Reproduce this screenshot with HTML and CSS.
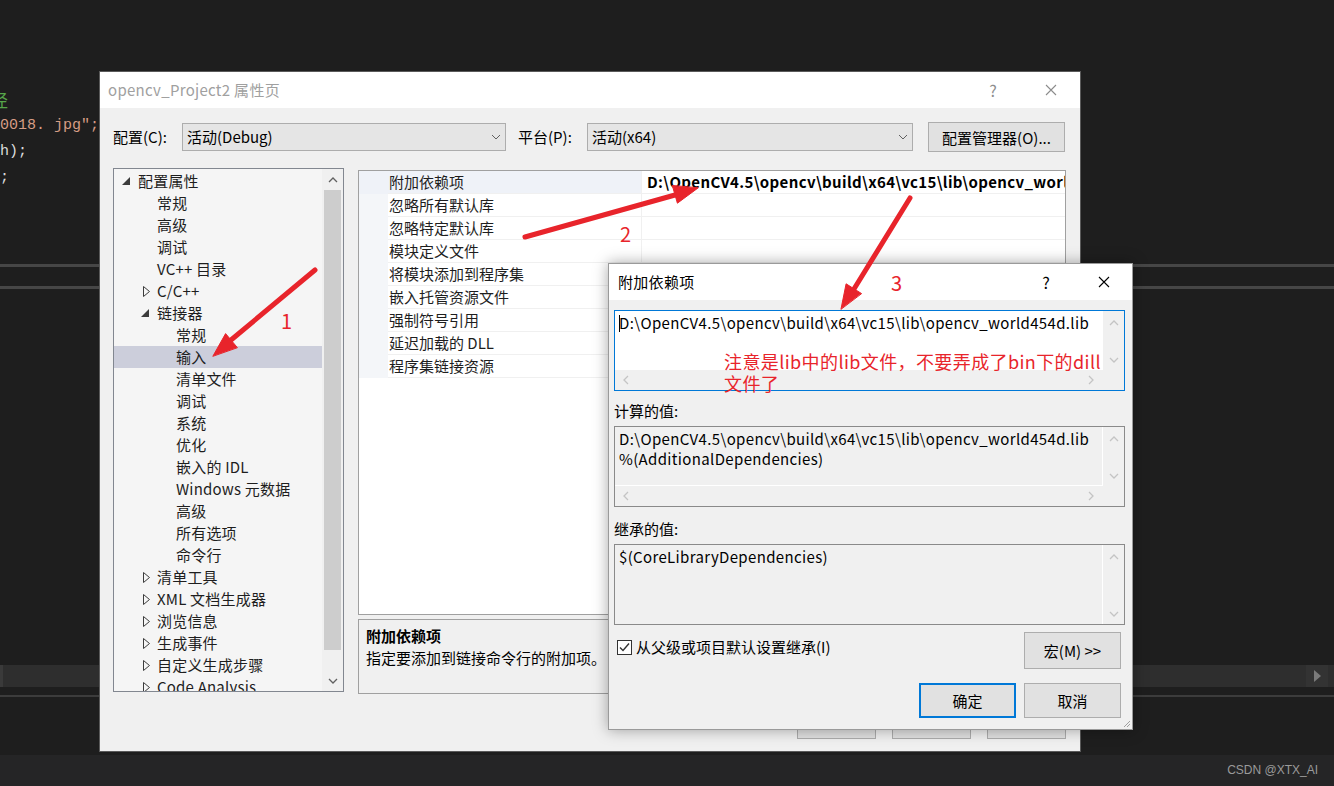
FILE: index.html
```html
<!DOCTYPE html>
<html lang="zh-CN">
<head>
    <meta charset="UTF-8">
    <title>opencv_Project2 属性页</title>
    <link rel="stylesheet" href="styles.css">
</head>
<body>

<div class="desktop">
    <!-- editor behind the dialogs -->
    <div class="editor">
        <div class="code">
            <div class="ln cmt"><span class="cut-a">径</span></div>
            <div class="ln str">0018. jpg″;</div>
            <div class="ln">h);</div>
            <div class="ln">;</div>
        </div>
        <div class="rule rule-top"></div>
        <div class="rule rule-mid"></div>
        <div class="hscroll">
            <span class="hs-start"></span>
            <span class="hs-arrow"><svg width="7" height="12" viewBox="0 0 7 12"><path d="M0 0L7 6L0 12Z" fill="#7a7a7a"/></svg></span>
        </div>
        <div class="rule rule-low"></div>
    </div>
    <div class="status">CSDN @XTX_AI</div>

    <!-- property pages dialog -->
    <section class="dlg dlg-main">
        <header class="titlebar">
            <span class="title">opencv_Project2 属性页</span>
            <span class="tb-btn tb-help">?</span>
            <span class="tb-btn tb-close"><svg width="12" height="12" viewBox="0 0 12 12"><path d="M1 1L11 11M11 1L1 11" stroke="currentColor" stroke-width="1.1"/></svg></span>
        </header>
        <div class="dlg-body">
            <div class="cfg-row">
                <span class="cfg-label">配置(C):</span>
                <div class="select sel-cfg">
                    <span>活动(Debug)</span>
                    <svg width="10" height="6" viewBox="0 0 10 6"><path d="M1 1L5 5L9 1" fill="none" stroke="#606060"/></svg>
                </div>
                <span class="cfg-label plat">平台(P):</span>
                <div class="select sel-plat">
                    <span>活动(x64)</span>
                    <svg width="10" height="6" viewBox="0 0 10 6"><path d="M1 1L5 5L9 1" fill="none" stroke="#606060"/></svg>
                </div>
                <button class="btn btn-mgr">配置管理器(O)...</button>
            </div>

            <div class="main-area">
                <div class="tree">
                    <div class="tree-list">
                        <div class="node l0"><span class="tw"><svg class="t-open" width="8" height="8" viewBox="0 0 8 8"><path d="M8 0V8H0Z"/></svg></span>配置属性</div>
                        <div class="node l1"><span class="tw"></span>常规</div>
                        <div class="node l1"><span class="tw"></span>高级</div>
                        <div class="node l1"><span class="tw"></span>调试</div>
                        <div class="node l1"><span class="tw"></span>VC++ 目录</div>
                        <div class="node l1"><span class="tw"><svg class="t-closed" width="7" height="11" viewBox="0 0 7 11"><path d="M.5 .5L6.5 5.5L.5 10.5Z"/></svg></span>C/C++</div>
                        <div class="node l1"><span class="tw"><svg class="t-open" width="8" height="8" viewBox="0 0 8 8"><path d="M8 0V8H0Z"/></svg></span>链接器</div>
                        <div class="node l2"><span class="tw"></span>常规</div>
                        <div class="node l2 selected"><span class="tw"></span>输入</div>
                        <div class="node l2"><span class="tw"></span>清单文件</div>
                        <div class="node l2"><span class="tw"></span>调试</div>
                        <div class="node l2"><span class="tw"></span>系统</div>
                        <div class="node l2"><span class="tw"></span>优化</div>
                        <div class="node l2"><span class="tw"></span>嵌入的 IDL</div>
                        <div class="node l2"><span class="tw"></span>Windows 元数据</div>
                        <div class="node l2"><span class="tw"></span>高级</div>
                        <div class="node l2"><span class="tw"></span>所有选项</div>
                        <div class="node l2"><span class="tw"></span>命令行</div>
                        <div class="node l1"><span class="tw"><svg class="t-closed" width="7" height="11" viewBox="0 0 7 11"><path d="M.5 .5L6.5 5.5L.5 10.5Z"/></svg></span>清单工具</div>
                        <div class="node l1"><span class="tw"><svg class="t-closed" width="7" height="11" viewBox="0 0 7 11"><path d="M.5 .5L6.5 5.5L.5 10.5Z"/></svg></span>XML 文档生成器</div>
                        <div class="node l1"><span class="tw"><svg class="t-closed" width="7" height="11" viewBox="0 0 7 11"><path d="M.5 .5L6.5 5.5L.5 10.5Z"/></svg></span>浏览信息</div>
                        <div class="node l1"><span class="tw"><svg class="t-closed" width="7" height="11" viewBox="0 0 7 11"><path d="M.5 .5L6.5 5.5L.5 10.5Z"/></svg></span>生成事件</div>
                        <div class="node l1"><span class="tw"><svg class="t-closed" width="7" height="11" viewBox="0 0 7 11"><path d="M.5 .5L6.5 5.5L.5 10.5Z"/></svg></span>自定义生成步骤</div>
                        <div class="node l1"><span class="tw"><svg class="t-closed" width="7" height="11" viewBox="0 0 7 11"><path d="M.5 .5L6.5 5.5L.5 10.5Z"/></svg></span>Code Analysis</div>
                    </div>
                    <div class="vscroll">
                        <span class="sb-arrow"><svg width="10" height="6" viewBox="0 0 10 6"><path d="M1 5L5 1L9 5" fill="none" stroke="#606060" stroke-width="1.3"/></svg></span>
                        <span class="sb-track"><span class="sb-thumb"></span></span>
                        <span class="sb-arrow"><svg width="10" height="6" viewBox="0 0 10 6"><path d="M1 1L5 5L9 1" fill="none" stroke="#606060" stroke-width="1.3"/></svg></span>
                    </div>
                </div>

                <div class="right-col">
                    <div class="pgrid">
                        <div class="prow current"><span class="gut"></span><span class="pname">附加依赖项</span><span class="pval">D:\OpenCV4.5\opencv\build\x64\vc15\lib\opencv_world454d.lib;%(AdditionalDependencies)</span></div>
                        <div class="prow"><span class="gut"></span><span class="pname">忽略所有默认库</span><span class="pval"></span></div>
                        <div class="prow"><span class="gut"></span><span class="pname">忽略特定默认库</span><span class="pval"></span></div>
                        <div class="prow"><span class="gut"></span><span class="pname">模块定义文件</span><span class="pval"></span></div>
                        <div class="prow"><span class="gut"></span><span class="pname">将模块添加到程序集</span><span class="pval"></span></div>
                        <div class="prow"><span class="gut"></span><span class="pname">嵌入托管资源文件</span><span class="pval"></span></div>
                        <div class="prow"><span class="gut"></span><span class="pname">强制符号引用</span><span class="pval"></span></div>
                        <div class="prow"><span class="gut"></span><span class="pname">延迟加载的 DLL</span><span class="pval"></span></div>
                        <div class="prow"><span class="gut"></span><span class="pname">程序集链接资源</span><span class="pval"></span></div>
                    </div>
                    <div class="desc">
                        <div class="desc-title">附加依赖项</div>
                        <div class="desc-text">指定要添加到链接命令行的附加项。<span class="desc-mark">[</span></div>
                    </div>
                </div>
            </div>

            <div class="footer">
                <button class="btn btn-foot">确定</button>
                <button class="btn btn-foot">取消</button>
                <button class="btn btn-foot">应用(A)</button>
            </div>
        </div>
    </section>

    <!-- additional dependencies editor -->
    <section class="dlg dlg-sub">
        <header class="titlebar">
            <span class="title">附加依赖项</span>
            <span class="tb-btn tb-help">?</span>
            <span class="tb-btn tb-close"><svg width="12" height="12" viewBox="0 0 12 12"><path d="M1 1L11 11M11 1L1 11" stroke="currentColor" stroke-width="1.1"/></svg></span>
        </header>
        <div class="dlg-body sub-body">
            <div class="tbox editable">
                <div class="tb-text"><span class="caret"></span>D:\OpenCV4.5\opencv\build\x64\vc15\lib\opencv_world454d.lib</div>
                <div class="tb-v">
                    <svg width="10" height="6" viewBox="0 0 10 6"><path d="M1 5L5 1L9 5" fill="none" stroke="#c4c4c4" stroke-width="1.3"/></svg>
                    <svg width="10" height="6" viewBox="0 0 10 6"><path d="M1 1L5 5L9 1" fill="none" stroke="#c4c4c4" stroke-width="1.3"/></svg>
                </div>
                <div class="tb-h">
                    <svg width="6" height="10" viewBox="0 0 6 10"><path d="M5 1L1 5L5 9" fill="none" stroke="#c4c4c4" stroke-width="1.3"/></svg>
                    <svg width="6" height="10" viewBox="0 0 6 10"><path d="M1 1L5 5L1 9" fill="none" stroke="#c4c4c4" stroke-width="1.3"/></svg>
                </div>
                <div class="tb-corner"></div>
            </div>

            <div class="field-label">计算的值:</div>
            <div class="tbox readonly">
                <div class="tb-text">D:\OpenCV4.5\opencv\build\x64\vc15\lib\opencv_world454d.lib<br>%(AdditionalDependencies)</div>
                <div class="tb-v">
                    <svg width="10" height="6" viewBox="0 0 10 6"><path d="M1 5L5 1L9 5" fill="none" stroke="#c4c4c4" stroke-width="1.3"/></svg>
                    <svg width="10" height="6" viewBox="0 0 10 6"><path d="M1 1L5 5L9 1" fill="none" stroke="#c4c4c4" stroke-width="1.3"/></svg>
                </div>
                <div class="tb-h">
                    <svg width="6" height="10" viewBox="0 0 6 10"><path d="M5 1L1 5L5 9" fill="none" stroke="#c4c4c4" stroke-width="1.3"/></svg>
                    <svg width="6" height="10" viewBox="0 0 6 10"><path d="M1 1L5 5L1 9" fill="none" stroke="#c4c4c4" stroke-width="1.3"/></svg>
                </div>
                <div class="tb-corner"></div>
            </div>

            <div class="field-label second">继承的值:</div>
            <div class="tbox readonly no-h">
                <div class="tb-text">$(CoreLibraryDependencies)</div>
                <div class="tb-v">
                    <svg width="10" height="6" viewBox="0 0 10 6"><path d="M1 5L5 1L9 5" fill="none" stroke="#c4c4c4" stroke-width="1.3"/></svg>
                    <svg width="10" height="6" viewBox="0 0 10 6"><path d="M1 1L5 5L9 1" fill="none" stroke="#c4c4c4" stroke-width="1.3"/></svg>
                </div>
            </div>

            <div class="inherit-row">
                <label class="check">
                    <svg width="15" height="15" viewBox="0 0 15 15"><rect x=".5" y=".5" width="14" height="14" fill="#fff" stroke="#333"/><path d="M3 7.5L6 10.5L12 3.5" fill="none" stroke="#333" stroke-width="1.4"/></svg>
                    从父级或项目默认设置继承(I)
                </label>
                <button class="btn btn-dlg">宏(M) &gt;&gt;</button>
            </div>

            <div class="actions">
                <button class="btn btn-dlg default">确定</button>
                <button class="btn btn-dlg">取消</button>
            </div>
        </div>
        <svg class="grip" width="8" height="8" viewBox="0 0 8 8"><path d="M7 1L1 7M7 4L4 7M7 7L7 7" stroke="#a0a0a0"/></svg>
    </section>

    <!-- red annotations drawn on the screenshot -->
    <svg class="marks" width="1334" height="786" viewBox="0 0 1334 786">
        <g stroke="#e8242b" stroke-width="5" stroke-linecap="round" fill="#e8242b">
            <line x1="315" y1="270" x2="231" y2="340"/>
            <path d="M213 356L225.6 333.6L237.2 347.4Z" stroke-width="1"/>
            <line x1="525" y1="237" x2="675" y2="195"/>
            <path d="M698 188L677.4 203.2L672.4 185.8Z" stroke-width="1"/>
            <line x1="910" y1="198" x2="854" y2="289"/>
            <path d="M841 309L846.1 283.8L861.3 293.4Z" stroke-width="1"/>
        </g>
        <text x="281" y="329" class="mark-num">1</text>
        <text x="620" y="242" class="mark-num">2</text>
        <text x="891" y="291" class="mark-num">3</text>
    </svg>
    <div class="note">注意是lib中的lib文件，不要弄成了bin下的dill<br>文件了</div>
</div>

</body>
</html>
```

FILE: styles.css
```css
:root {
    --ui-font: "Noto Sans CJK SC", sans-serif;
    --dlg-bg: #f0f0f0;
    --btn-bg: #e1e1e1;
    --btn-border: #adadad;
    --accent: #0078d7;
    --mark: #e8242b;
}

* {
    box-sizing: border-box;
    margin: 0;
    padding: 0;
}

body {
    background: #1e1e1e;
    font-family: var(--ui-font);
    overflow: hidden;
}

.desktop {
    position: relative;
    width: 1334px;
    height: 786px;
    overflow: hidden;
    display: flex;
    flex-direction: column;
}

/* ---------- editor ---------- */

.editor {
    height: 755px;
    background: #1e1e1e;
}

.code {
    padding-top: 87px;
    font-family: "Liberation Mono", monospace;
    font-size: 15px;
    color: #dcdcdc;
}

.ln {
    height: 26px;
    line-height: 26px;
    white-space: pre;
}

.ln.cmt {
    color: #57a64a;
    font-family: "Noto Sans CJK SC", sans-serif;
    font-size: 17px;
}

.cut-a {
    margin-left: -9px;
}

.ln.str {
    color: #d69d85;
}

.rule {
    background: #464646;
}

.rule-top {
    height: 3px;
    margin-top: 73px;
}

.rule-mid {
    height: 3px;
    margin-top: 19px;
}

.hscroll {
    margin-top: 376px;
    height: 22px;
    background: #2e2e2e;
    display: flex;
    justify-content: space-between;
}

.hs-start {
    width: 3px;
    background: #3a3a3a;
}

.hs-arrow {
    width: 22px;
    margin-right: 6px;
    background: #333;
    display: flex;
    align-items: center;
    justify-content: center;
}

.rule-low {
    height: 2px;
    margin-top: 8px;
    background: #3c3c3c;
}

.status {
    height: 31px;
    background: #252526;
    color: #9a9a9a;
    font-family: "Liberation Sans", sans-serif;
    font-size: 12px;
    line-height: 31px;
    text-align: right;
    padding-right: 16px;
}

/* ---------- dialogs ---------- */

.dlg {
    position: absolute;
    background: var(--dlg-bg);
    font-size: 15px;
    color: #000;
    display: flex;
    flex-direction: column;
}

.dlg-main {
    left: 99px;
    top: 71px;
    width: 982px;
    height: 681px;
    border: 1px solid #5a5a5a;
}

.dlg-sub {
    left: 608px;
    top: 263px;
    width: 525px;
    height: 467px;
    border: 1px solid #9a9a9a;
    box-shadow: 0 0 14px rgba(0, 0, 0, 0.35);
}

.titlebar {
    height: 36px;
    background: #fff;
    display: flex;
    align-items: center;
    padding-left: 8px;
}

.title {
    flex: 1;
    color: #a0a0a0;
    line-height: 20px;
    letter-spacing: 0.3px;
}

.tb-btn {
    width: 46px;
    height: 36px;
    display: flex;
    align-items: center;
    justify-content: center;
    color: #8c8c8c;
    font-size: 16px;
}

.tb-help {
    margin-right: 12px;
}

.tb-close {
    margin-right: 6px;
}

.dlg-sub .titlebar {
    padding-left: 9px;
}

.dlg-sub .title,
.dlg-sub .tb-btn {
    color: #000;
}

.dlg-sub .tb-close {
    margin-right: 5px;
}

.dlg-body {
    flex: 1;
    padding: 14px 14px 0 13px;
}

.btn {
    font-family: var(--ui-font);
    font-size: 15px;
    color: #000;
    background: var(--btn-bg);
    border: 1px solid var(--btn-border);
}

/* config row */

.cfg-row {
    display: flex;
    align-items: center;
    height: 30px;
}

.cfg-label {
    width: 69px;
    line-height: 20px;
}

.cfg-label.plat {
    margin-left: 12px;
}

.select {
    height: 28px;
    background: #e5e5e5;
    border: 1px solid var(--btn-border);
    display: flex;
    align-items: center;
    justify-content: space-between;
    padding: 0 4px 0 4px;
    line-height: 20px;
}

.sel-cfg {
    width: 324px;
}

.sel-plat {
    width: 326px;
}

.btn-mgr {
    width: 137px;
    height: 30px;
    margin-left: 15px;
}

/* tree + grid */

.main-area {
    display: grid;
    grid-template-columns: 231px 1fr;
    gap: 14px;
    height: 526px;
    margin-top: 16px;
}

.tree {
    height: 524px;
    border: 1px solid #828790;
    background: #f5f5f5;
    display: flex;
    overflow: hidden;
}

.tree-list {
    width: 208px;
    padding-top: 1px;
    overflow: hidden;
}

.node {
    height: 22px;
    line-height: 22px;
    display: flex;
    align-items: center;
    white-space: nowrap;
    color: #1e1e1e;
    letter-spacing: 0.2px;
}

.node.l0 { padding-left: 5px; }
.node.l1 { padding-left: 24px; }
.node.l2 { padding-left: 43px; }

.node.selected {
    background: #cccedb;
}

.tw {
    width: 19px;
    height: 22px;
    display: flex;
    align-items: center;
    flex-shrink: 0;
}

.t-open {
    margin-left: 3px;
    fill: #3c3c3c;
}

.t-closed {
    margin-left: 5px;
    fill: none;
    stroke: #3c3c3c;
}

.vscroll {
    width: 21px;
    background: #f0f0f0;
    display: flex;
    flex-direction: column;
}

.sb-arrow {
    height: 21px;
    display: flex;
    align-items: center;
    justify-content: center;
}

.sb-track {
    flex: 1;
    padding: 0 2px;
}

.sb-thumb {
    display: block;
    height: 460px;
    background: #cdcdcd;
}

.right-col {
    padding-top: 2px;
    display: flex;
    flex-direction: column;
    gap: 4px;
}

.pgrid {
    height: 445px;
    border: 1px solid #a0a0a0;
    background: #fff;
    overflow: hidden;
}

.prow {
    display: grid;
    grid-template-columns: 29px 254px 1fr;
    height: 23px;
    line-height: 22px;
}

.gut {
    background: #f4f6f9;
}

.pname {
    padding-left: 1px;
    border-bottom: 1px solid #f0f0f0;
    border-right: 1px solid #f0f0f0;
    color: #1e1e1e;
    white-space: nowrap;
}

.pval {
    padding-left: 5px;
    border-bottom: 1px solid #f0f0f0;
    white-space: nowrap;
    overflow: hidden;
    font-weight: bold;
    letter-spacing: 0.35px;
}

.prow.current .gut,
.prow.current .pname {
    background: #eff2f8;
}

.desc {
    height: 75px;
    border: 1px solid #a0a0a0;
    padding: 5px 7px;
    line-height: 22px;
}

.desc-title {
    font-weight: bold;
}

.desc-mark {
    color: #d98a1e;
    margin-left: 2px;
}

.footer {
    display: flex;
    justify-content: flex-end;
    gap: 16px;
    margin-top: 15px;
}

.btn-foot {
    width: 79px;
    height: 30px;
    padding-bottom: 8px;
}

/* ---------- sub dialog ---------- */

.sub-body {
    padding: 10px 7px 0 5px;
}

.tbox {
    height: 81px;
    border: 1px solid #8a8a8a;
    display: grid;
    grid-template-columns: 1fr 21px;
    grid-template-rows: 1fr 20px;
    background: var(--dlg-bg);
}

.tbox.editable {
    border-color: var(--accent);
}

.tbox.no-h {
    grid-template-rows: 1fr;
}

.tb-text {
    padding: 2px 4px;
    line-height: 20px;
    white-space: nowrap;
    overflow: hidden;
    border-right: 1px solid #fff;
    border-bottom: 1px solid #fff;
    letter-spacing: 0.35px;
}

.editable .tb-text {
    background: #fff;
}

.no-h .tb-text {
    border-bottom: none;
}

.caret {
    display: inline-block;
    width: 1px;
    height: 17px;
    background: #000;
    vertical-align: -3px;
    margin-right: -1px;
}

.tb-v {
    display: flex;
    flex-direction: column;
    justify-content: space-between;
    align-items: center;
    padding: 9px 0 7px;
}

.tb-h {
    display: flex;
    justify-content: space-between;
    align-items: center;
    padding: 0 9px 0 8px;
}

.field-label {
    height: 35px;
    padding-top: 10px;
    line-height: 20px;
}

.field-label.second {
    height: 37px;
    padding-top: 12px;
}

.inherit-row {
    display: flex;
    justify-content: space-between;
    align-items: flex-start;
    margin-top: 7px;
    margin-right: 4px;
}

.check {
    display: flex;
    align-items: center;
    gap: 4px;
    margin: 5px 0 0 3px;
    line-height: 20px;
}

.btn-dlg {
    width: 97px;
    height: 37px;
}

.actions {
    display: flex;
    justify-content: flex-end;
    gap: 8px;
    margin: 14px 4px 0 0;
}

.actions .btn-dlg {
    height: 35px;
}

.btn-dlg.default {
    border: 2px solid var(--accent);
}

.grip {
    position: absolute;
    right: 1px;
    bottom: 1px;
}

/* ---------- annotations ---------- */

.marks {
    position: absolute;
    left: 0;
    top: 0;
    pointer-events: none;
}

.mark-num {
    fill: var(--mark);
    font-family: var(--ui-font);
    font-size: 20px;
}

.note {
    position: absolute;
    left: 724px;
    top: 350px;
    color: var(--mark);
    font-size: 18px;
    line-height: 22px;
    letter-spacing: 0.4px;
}
```
